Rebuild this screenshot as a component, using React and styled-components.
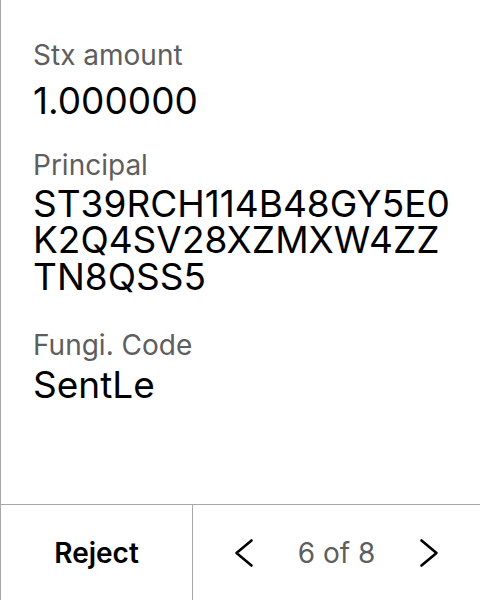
import React from "react";
import styled, { createGlobalStyle } from "styled-components";

const Global = createGlobalStyle`
  html, body { margin: 0; padding: 0; background: #fff; }
  body { font-family: Inter, "Noto Sans", sans-serif; }
  #root { height: 600px; }
`;

const Screen = styled.div`
  height: 600px;
  box-sizing: border-box;
  border-left: 1px solid #a8a8a8;
  display: flex;
  flex-direction: column;
`;

const Content = styled.div`
  flex: 1;
  padding: 38px 28px 0 32px;
  display: flex;
  flex-direction: column;
`;

const Field = styled.div`
  display: flex;
  flex-direction: column;
  margin-bottom: ${(p) => p.$after}px;
`;

const Label = styled.div`
  font-size: 28px;
  line-height: 34px;
  color: #5e5e5e;
  margin-bottom: ${(p) => p.$gap}px;
`;

const Value = styled.div`
  font-size: 37px;
  line-height: 36.5px;
  color: #000;
  word-break: break-all;
`;

const Footer = styled.div`
  height: 96px;
  box-sizing: border-box;
  border-top: 1px solid #a8a8a8;
  display: flex;
`;

const RejectButton = styled.button`
  width: 192px;
  border: none;
  border-right: 1px solid #a8a8a8;
  background: transparent;
  font-family: inherit;
  font-weight: 600;
  font-size: 28px;
  color: #000;
  padding: 0;
`;

const Pager = styled.div`
  flex: 1;
  display: flex;
  align-items: center;
  justify-content: space-between;
  padding: 0 40px;
`;

const Arrow = styled.button`
  border: none;
  background: transparent;
  padding: 0;
  display: flex;
  align-items: center;
  justify-content: center;
`;

const PageText = styled.span`
  font-size: 28px;
  color: #5e5e5e;
`;

const Chevron = ({ dir }) => (
  <svg width="22" height="30" viewBox="0 0 22 30" fill="none">
    <path
      d={dir === "left" ? "M18.5 2.5 L3.5 15 L18.5 27.5" : "M3.5 2.5 L18.5 15 L3.5 27.5"}
      stroke="#000"
      strokeWidth="2.6"
      strokeLinecap="round"
      strokeLinejoin="round"
    />
  </svg>
);

const fields = [
  { label: "Stx amount", value: "1.000000", gap: 11, after: 28 },
  { label: "Principal", value: "ST39RCH114B48GY5E0K2Q4SV28XZMXW4ZZTN8QSS5", gap: 4, after: 33 },
  { label: "Fungi. Code", value: "SentLe", gap: 5, after: 0 },
];

export default function App() {
  return (
    <>
      <Global />
      <Screen>
        <Content>
          {fields.map((f) => (
            <Field key={f.label} $after={f.after}>
              <Label $gap={f.gap}>{f.label}</Label>
              <Value>{f.value}</Value>
            </Field>
          ))}
        </Content>
        <Footer>
          <RejectButton>Reject</RejectButton>
          <Pager>
            <Arrow><Chevron dir="left" /></Arrow>
            <PageText>6 of 8</PageText>
            <Arrow><Chevron dir="right" /></Arrow>
          </Pager>
        </Footer>
      </Screen>
    </>
  );
}
